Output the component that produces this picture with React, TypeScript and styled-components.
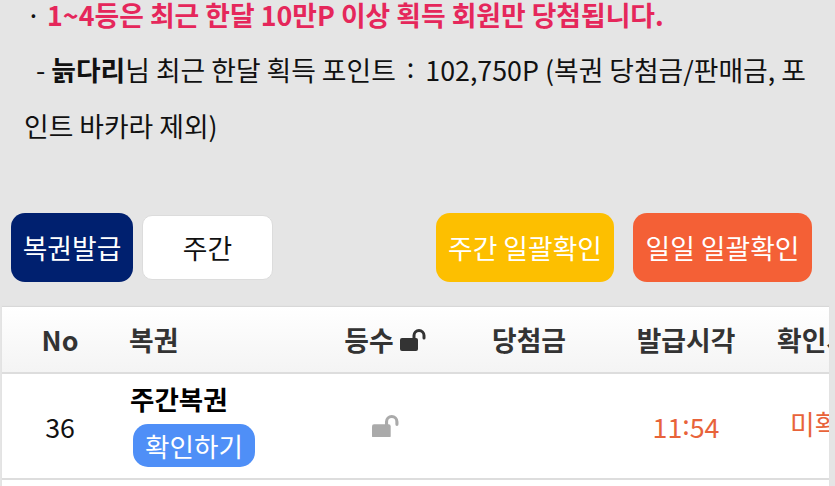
import React from 'react';
import styled, { createGlobalStyle } from "styled-components";

const GlobalStyle = createGlobalStyle`
    html, body {
        margin: 0;
        height: 100%;
        overflow: hidden;
        background-color: #e5e5e5;
    }
    body {
        font-family: "Noto Sans CJK KR", "Noto Sans", sans-serif;
    }
`

const LockIcon = ({color, size}: { color: string, size: number }) => (
    <svg width={size} height={size * 22 / 26} viewBox="0 0 26 22" fill="none">
        <rect x="0" y="9" width="18" height="13" rx="2" fill={color}/>
        <path d="M14 10V6.500a5 5 0 0 1 10 0V9" stroke={color} strokeWidth="3" strokeLinecap="round"/>
    </svg>
);

export default function App() {
    return (
        <Page>
            <GlobalStyle/>
            <Notice>
                <FirstLine>
                    <Dot>·</Dot> <Red>1~4등은 최근 한달 10만P 이상 획득 회원만 당첨됩니다.</Red>
                </FirstLine>
                <Line>
                    &nbsp;&nbsp;- <b>늙다리</b>님 최근 한달 획득 포인트 <Colon $gap={5}>:</Colon> 102,750P (복권 당첨금/판매금, 포
                </Line>
                <Line>인트 바카라 제외)</Line>
            </Notice>
            <Toolbar>
                <ToolGroup>
                    <ActionButton $bg="#00206f" $width={122}>복권발급</ActionButton>
                    <SelectBox>주간</SelectBox>
                </ToolGroup>
                <ToolGroup $gap={19}>
                    <ActionButton $bg="#fdbf00" $width={178}>주간 일괄확인</ActionButton>
                    <ActionButton $bg="#f46036" $width={179}>일일 일괄확인</ActionButton>
                </ToolGroup>
            </Toolbar>
            <Table>
                <HeadRow>
                    <Cell>No</Cell>
                    <Cell $left>복권</Cell>
                    <Cell>등수&nbsp;<LockIcon color="#333" size={26}/></Cell>
                    <Cell>당첨금</Cell>
                    <Cell>발급시각</Cell>
                    <Cell $left>확인시각</Cell>
                </HeadRow>
                <BodyRow>
                    <Cell>36</Cell>
                    <TicketCell>
                        <TicketName>주간복권</TicketName>
                        <CheckButton>확인하기</CheckButton>
                    </TicketCell>
                    <Cell><LockIcon color="#aaaaaa" size={27}/></Cell>
                    <Cell/>
                    <TimeCell><span>11<Colon>:</Colon>54</span></TimeCell>
                    <StatusCell>미확인</StatusCell>
                </BodyRow>
            </Table>
        </Page>
    );
}

const Page = styled.div`
    width: 835px;
    height: 486px;
    overflow: hidden;
    color: #111;
`

const Notice = styled.div`
    padding: 0 6px 0 24px;
    font-size: 26.8px;
    line-height: 56px;
    height: 155px;
    margin-top: -1px;
`

const Line = styled.div`
    white-space: nowrap;
`

const FirstLine = styled(Line)`
    height: 31px;
    line-height: 31px;
    margin-bottom: 12px;
`

const Dot = styled.span`
    margin-left: 2px;
`

const Red = styled.span`
    color: #e5275b;
    font-weight: 700;
    font-size: 26.8px;
`

const Colon = styled.span<{ $gap?: number }>`
    vertical-align: 3px;
    line-height: 0;
    margin: 0 ${props => props.$gap ?? 0}px;
`

const Toolbar = styled.div`
    margin-top: 59px;
    height: 69px;
    padding: 0 23px 0 11px;
    display: flex;
    justify-content: space-between;
    align-items: center;
`

const ToolGroup = styled.div<{ $gap?: number }>`
    display: flex;
    align-items: center;
    gap: ${props => props.$gap ?? 9}px;
`

const ActionButton = styled.div<{ $bg: string, $width: number }>`
    width: ${props => props.$width}px;
    height: 69px;
    border-radius: 14px;
    background-color: ${props => props.$bg};
    color: #fff;
    font-size: 26.8px;
    display: flex;
    align-items: center;
    justify-content: center;
`

const SelectBox = styled.div`
    width: 131px;
    height: 65px;
    box-sizing: border-box;
    border: 1px solid #dcdcdc;
    border-radius: 10px;
    background-color: #fff;
    font-size: 26.8px;
    display: flex;
    align-items: center;
    justify-content: center;
`

const Table = styled.div`
    margin: 25px 6px 0 2px;
    background-color: #fff;
    overflow: hidden;
    height: 179px;
    box-shadow: 0 -1px 1px #d8d8d8;
`

const Row = styled.div`
    display: grid;
    grid-template-columns: 116px 200px 134px 154px 160px 1fr;
`

const HeadRow = styled(Row)`
    height: 65px;
    background: linear-gradient(#ffffff, #f4f4f4);
    border-bottom: 2px solid #dddddd;
    color: #333;
    font-size: 26.8px;
    font-weight: 700;
`

const BodyRow = styled(Row)`
    height: 104px;
    border-bottom: 2px solid #dddddd;
    font-size: 26.8px;
`

const Cell = styled.div<{ $left?: boolean }>`
    display: flex;
    align-items: center;
    justify-content: ${props => props.$left ? 'flex-start' : 'center'};
    padding-left: ${props => props.$left ? '11px' : '0'};
    white-space: nowrap;
    overflow: hidden;
`

const TicketCell = styled.div`
    padding-left: 12px;
    display: flex;
    flex-direction: column;
    align-items: flex-start;
`

const TicketName = styled.div`
    margin-top: 8px;
    font-weight: 700;
    font-size: 26.5px;
    line-height: 34px;
    color: #000;
`

const CheckButton = styled.div`
    margin: 8px 0 0 3px;
    width: 122px;
    height: 43px;
    border-radius: 15px;
    background-color: #4f8ff7;
    color: #fff;
    font-size: 26.6px;
    display: flex;
    align-items: center;
    justify-content: center;
`

const TimeCell = styled(Cell)`
    color: #e8633a;
`

const StatusCell = styled(Cell)`
    color: #e8633a;
    justify-content: flex-start;
    padding-left: 24px;
    padding-bottom: 6px;
`
